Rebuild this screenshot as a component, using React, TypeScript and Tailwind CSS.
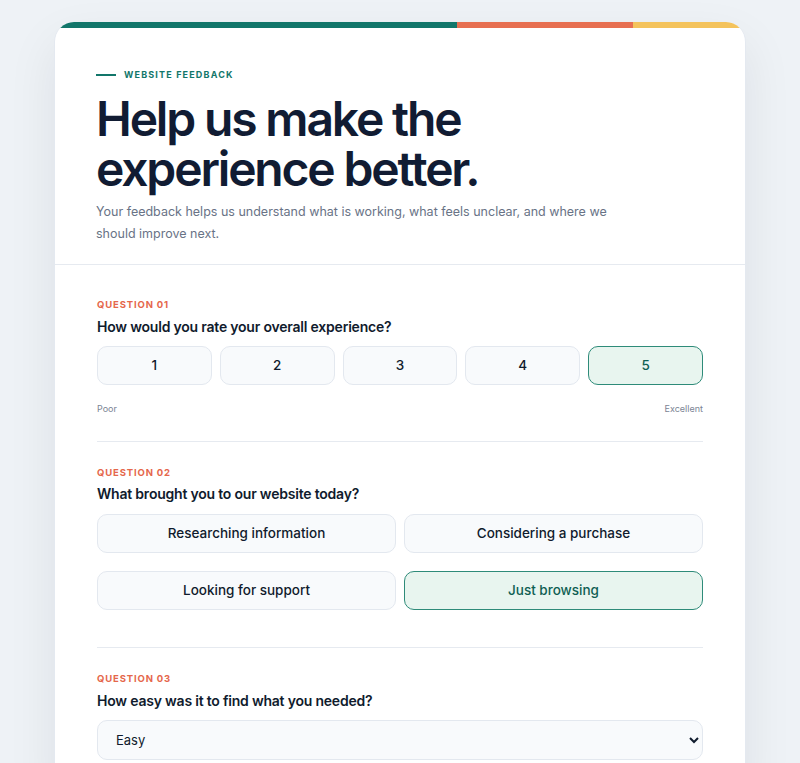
import React from "react";

const font = { fontFamily: "Inter, 'Noto Sans', sans-serif" };

function QLabel({ children }: { children: React.ReactNode }) {
  return (
    <div className="text-[9.5px] leading-[12px] font-bold tracking-[0.09em] text-[#e5674b]">
      {children}
    </div>
  );
}

function QTitle({ children }: { children: React.ReactNode }) {
  return (
    <div className="text-[14px] leading-[20px] font-semibold tracking-[-0.015em] text-[#101b2d]">
      {children}
    </div>
  );
}

function Choice({ label, selected }: { label: string; selected?: boolean }) {
  return (
    <button
      type="button"
      className={
        selected
          ? "h-[39px] rounded-[10px] border border-[#2e8b79] bg-[#e8f5ef] text-[13.5px] font-medium text-[#0f5f53]"
          : "h-[39px] rounded-[10px] border border-[#e3e8ef] bg-[#f8fafc] text-[13.5px] font-medium text-[#101b2d]"
      }
    >
      {label}
    </button>
  );
}

export default function App() {
  return (
    <div className="min-h-[763px] bg-[#eef2f6] pt-[22px]" style={font}>
      <div className="mx-auto w-[692px] overflow-hidden rounded-[20px] border-x border-[#e4e9f0] bg-white shadow-[0_20px_50px_rgba(15,23,42,0.08)]">
        <div className="flex h-[6px]">
          <div className="w-[402px] bg-[#12766a]" />
          <div className="w-[176px] bg-[#e76f51]" />
          <div className="flex-1 bg-[#f4c35c]" />
        </div>

        <div className="border-b border-[#e6eaf0] px-[41px] pt-[41px] pb-[19px]">
          <div className="flex items-center gap-2">
            <div className="h-[2px] w-[20px] bg-[#12766a]" />
            <div className="text-[9px] leading-[12px] font-bold tracking-[0.13em] text-[#12766a]">
              WEBSITE FEEDBACK
            </div>
          </div>
          <h1 className="mt-[13px] text-[48px] leading-[50px] font-semibold tracking-[-0.045em] text-[#111c33]">
            <span className="block">Help us make the</span>
            <span className="block">experience better.</span>
          </h1>
          <p className="mt-[7px] w-[530px] text-[12.5px] leading-[22px] text-[#697386]">
            Your feedback helps us understand what is working, what feels unclear, and where we should improve next.
          </p>
        </div>

        <div className="px-[42px]">
          <div className="border-b border-[#e6eaf0] pt-[34px] pb-[26px]">
            <QLabel>QUESTION 01</QLabel>
            <div className="mt-[6px]">
              <QTitle>How would you rate your overall experience?</QTitle>
            </div>
            <div className="mt-[9px] grid grid-cols-5 gap-2">
              <Choice label="1" />
              <Choice label="2" />
              <Choice label="3" />
              <Choice label="4" />
              <Choice label="5" selected />
            </div>
            <div className="mt-[18px] flex justify-between text-[9px] leading-[12px] text-[#7b8494]">
              <span>Poor</span>
              <span>Excellent</span>
            </div>
          </div>

          <div className="border-b border-[#e6eaf0] pt-[25px] pb-[37px]">
            <QLabel>QUESTION 02</QLabel>
            <div className="mt-[5px]">
              <QTitle>What brought you to our website today?</QTitle>
            </div>
            <div className="mt-[10px] grid grid-cols-2 gap-x-2 gap-y-[18px]">
              <Choice label="Researching information" />
              <Choice label="Considering a purchase" />
              <Choice label="Looking for support" />
              <Choice label="Just browsing" selected />
            </div>
          </div>

          <div className="pt-[25px] pb-[30px]">
            <QLabel>QUESTION 03</QLabel>
            <div className="mt-[6px]">
              <QTitle>How easy was it to find what you needed?</QTitle>
            </div>
            <select
              defaultValue="Easy"
              className="mt-[9px] h-[40px] w-full rounded-[10px] border border-[#e3e8ef] bg-[#f8fafc] pl-[14px] pr-[8px] text-[13px] text-[#101b2d]"
            >
              <option>Very easy</option>
              <option>Easy</option>
              <option>Neutral</option>
              <option>Difficult</option>
              <option>Very difficult</option>
            </select>
          </div>
        </div>
      </div>
    </div>
  );
}
